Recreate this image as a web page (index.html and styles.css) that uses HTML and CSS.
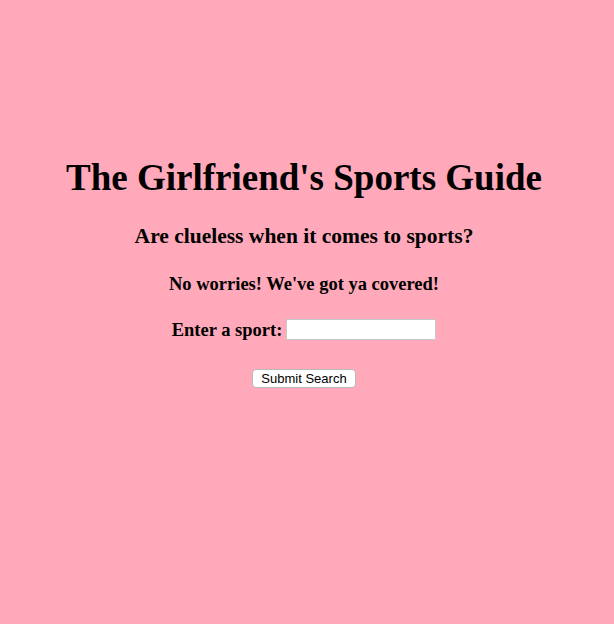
FILE: index.html
```html
<!DOCTYPE html>
<html>
<head>
<meta charset="utf-8">
<link rel="stylesheet" href="styles.css">
</head>
<body>
<main class="page">
  <h1 class="title">The Girlfriend's Sports Guide</h1>
  <h2 class="sub">Are clueless when it comes to sports?</h2>
  <h3 class="tag">No worries! We've got ya covered!</h3>
  <form class="search">
    <label class="field"><span class="label">Enter a sport:</span><input class="input" type="text"></label>
    <button class="btn" type="button">Submit Search</button>
  </form>
</main>
</body>
</html>
```
FILE: styles.css
```css
html, body { margin: 0; padding: 0; }
body {
  background: #ffa9ba;
  font-family: "Liberation Serif", "Times New Roman", serif;
  color: #000;
  height: 624px;
}
.page {
  display: flex;
  flex-direction: column;
  align-items: center;
  padding-top: 156px;
  padding-right: 6px;
}
.title { font-size: 37px; font-weight: bold; margin: 0; line-height: 44px; }
.sub { font-size: 21.5px; font-weight: bold; margin: 23px 0 0; line-height: 26px; }
.tag { font-size: 18.5px; font-weight: bold; margin: 24px 0 0; line-height: 22px; }
.search { display: flex; flex-direction: column; align-items: center; margin-top: 24px; }
.field { display: flex; align-items: center; gap: 4px; font-size: 18.5px; font-weight: bold; }
.input {
  width: 146px; height: 17px; border: 1px solid #c8c8c8; padding: 1px; margin: 0 0 2px;
  background: #fff; font-size: 13px;
}
.btn {
  margin-top: 27px;
  font-family: "Liberation Sans", Arial, sans-serif; font-size: 13px;
  background: #fff; border: 1px solid #b9b9b9; border-radius: 4px;
  padding: 1px 8px; height: 19px; line-height: 15px; color: #000;
}
```
